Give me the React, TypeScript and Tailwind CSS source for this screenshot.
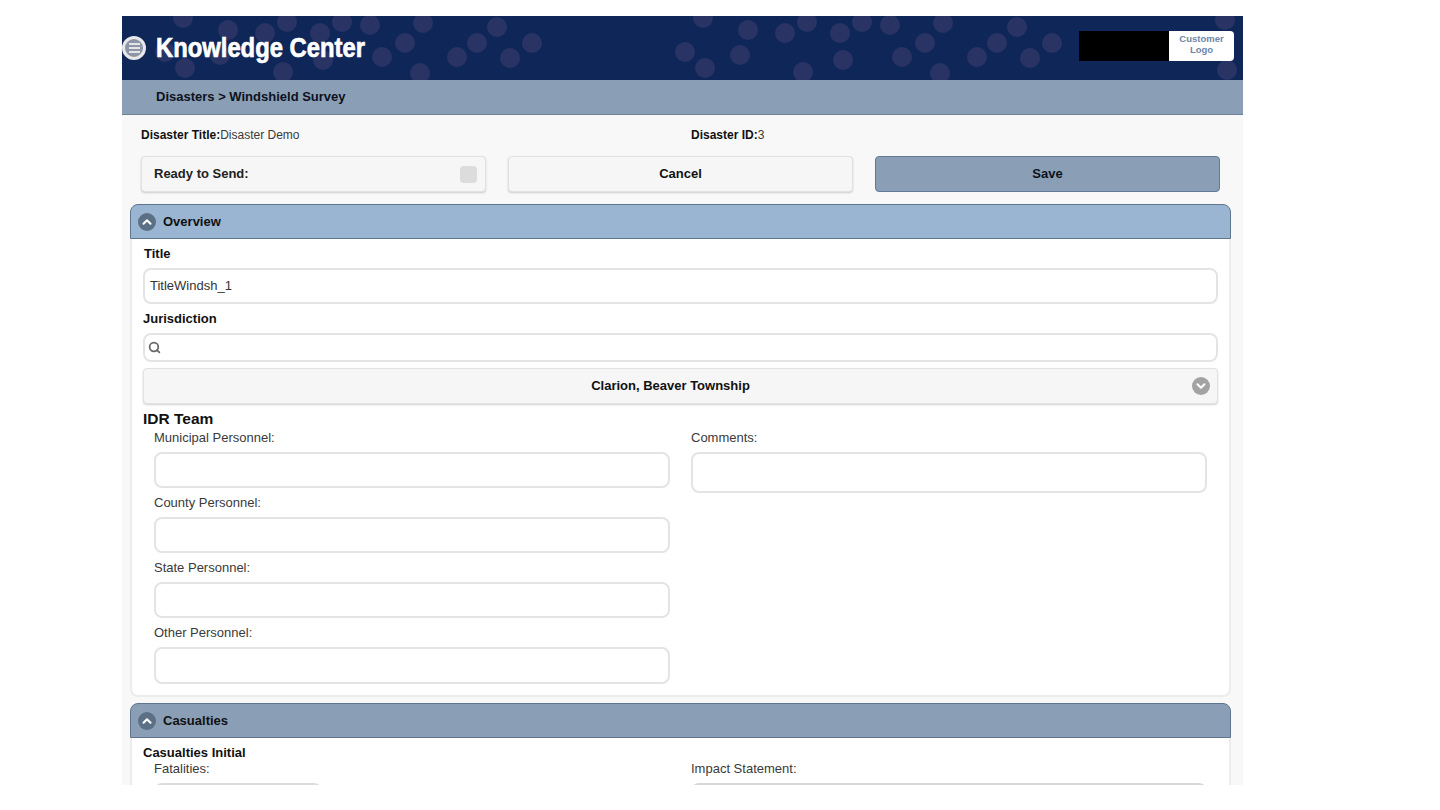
import React from 'react';
import { ChevronUp, ChevronDown, Search } from 'lucide-react';

const dots: [number, number][] = [
  [165, 52], [183, 18], [185, 68], [220, 55], [228, 30], [265, 33], [283, 72], [287, 22],
  [320, 33], [323, 60], [342, 22], [370, 25], [382, 57], [405, 43], [420, 73], [423, 23],
  [457, 57], [477, 43], [497, 27], [510, 58], [532, 43],
];

const HeaderDots = () => (
  <svg className="absolute inset-0" width="1121" height="64" viewBox="122 16 1121 64">
    {dots.map(([x, y], i) => (
      <circle key={i} cx={x} cy={y} r="10" fill="#293464" />
    ))}
    {dots.map(([x, y], i) => (
      <circle key={`b${i}`} cx={x + 520} cy={y} r="10" fill="#293464" />
    ))}
    <circle cx="1227" cy="70" r="10" fill="#293464" />
    <circle cx="1225" cy="20" r="10" fill="#293464" />
  </svg>
);

const Field = ({ label, className }: { label: string; className: string }) => (
  <div>
    <div className="text-[13px] leading-[15px] text-[#3a3a3a]">{label}</div>
    <div className={`mt-[7px] rounded-lg border-2 border-[#e4e4e4] bg-white ${className}`} />
  </div>
);

const SectionHeader = ({ title, bg }: { title: string; bg: string }) => (
  <div className={`flex h-[35px] items-center rounded-t-lg border border-[#5f7590] pl-[7px] ${bg}`}>
    <div className="flex h-[18px] w-[18px] items-center justify-center rounded-full bg-[#5c7085]">
      <ChevronUp size={14} strokeWidth={3.5} className="text-white" />
    </div>
    <span className="ml-[7px] text-[13px] font-bold text-[#111]">{title}</span>
  </div>
);

export default function App() {
  return (
    <div className="min-h-[810px] bg-white pt-[16px] font-['Liberation_Sans',Arial,sans-serif]">
      <div className="ml-[122px] h-[769px] w-[1121px] overflow-hidden bg-[#f8f8f8]">
        <div className="relative flex h-[64px] items-center overflow-hidden bg-[#0f2659]">
          <HeaderDots />
          <div className="relative flex h-[24px] w-[24px] items-center justify-center rounded-full border-[3px] border-[#e8e8e8] bg-[#8d96a8]">
            <div className="flex flex-col gap-[2px]">
              <div className="h-[2px] w-[11px] bg-[#e4e4e4]" />
              <div className="h-[2px] w-[11px] bg-[#e4e4e4]" />
              <div className="h-[2px] w-[11px] bg-[#e4e4e4]" />
            </div>
          </div>
          <div className="relative ml-[10px] origin-left scale-x-[0.85] whitespace-nowrap text-[28px] font-bold text-white [-webkit-text-stroke:0.7px_white]">
            Knowledge Center
          </div>
          <div className="absolute left-[957px] top-[15px] flex h-[30px]">
            <div className="w-[90px] bg-black" />
            <div className="flex w-[65px] items-center justify-center rounded-r-sm bg-white pb-[3px] text-center text-[9.5px] font-bold leading-[10.5px] text-[#6d86ab]">
              Customer
              <br />
              Logo
            </div>
          </div>
        </div>

        <div className="flex h-[35px] items-center border-b border-[#6d8097] bg-[#8a9fb6] pl-[34px] text-[13px] font-bold text-[#0c1220]">
          Disasters &gt; Windshield Survey
        </div>

        <div className="flex h-[41px] items-center pb-[2px] pl-[19px] text-[12px] text-[#3a3a3a]">
          <div className="w-[550px]">
            <span className="font-bold text-[#111]">Disaster Title:</span>Disaster Demo
          </div>
          <div>
            <span className="font-bold text-[#111]">Disaster ID:</span>3
          </div>
        </div>

        <div className="flex gap-[22px] pl-[19px]">
          <div className="flex h-[36px] w-[345px] items-center justify-between rounded border border-[#e2e2e2] bg-[#f6f6f6] pl-[12px] pr-[8px] text-[13px] font-bold text-[#222] shadow-[0_1px_2px_rgba(0,0,0,0.18)]">
            Ready to Send:
            <div className="h-[17px] w-[17px] rounded-sm bg-[#dcdcdc]" />
          </div>
          <div className="flex h-[36px] w-[345px] items-center justify-center rounded border border-[#e2e2e2] bg-[#f6f6f6] text-[13px] font-bold text-[#111] shadow-[0_1px_2px_rgba(0,0,0,0.18)]">
            Cancel
          </div>
          <div className="flex h-[36px] w-[345px] items-center justify-center rounded border border-[#627a94] bg-[#8a9fb6] text-[13px] font-bold text-[#0c1220]">
            Save
          </div>
        </div>

        <div className="ml-[8px] mt-[12px] w-[1101px]">
          <SectionHeader title="Overview" bg="bg-[#9ab5d1]" />
          <div className="h-[458px] rounded-b-lg border-x-2 border-b-2 border-[#ececec] bg-white px-[11px] pt-[7px]">
            <div className="pl-[1px] text-[13px] font-bold leading-[15px] text-[#111]">Title</div>
            <div className="mt-[7px] flex h-[36px] items-center rounded-lg border-2 border-[#e4e4e4] pl-[5px] text-[13px] text-[#333]">
              TitleWindsh_1
            </div>
            <div className="mt-[7px] text-[13px] font-bold leading-[15px] text-[#111]">Jurisdiction</div>
            <div className="mt-[7px] flex h-[29px] items-center rounded-lg border-2 border-[#e4e4e4] pl-[3px]">
              <Search size={13} strokeWidth={3.2} className="text-[#666]" />
            </div>
            <div className="relative mt-[6px] flex h-[36px] items-center justify-center rounded border border-[#e2e2e2] bg-[#f6f6f6] pr-[20px] text-[13px] font-bold text-[#111] shadow-[0_1px_2px_rgba(0,0,0,0.18)]">
              Clarion, Beaver Township
              <div className="absolute right-[7px] top-[8px] flex h-[18px] w-[18px] items-center justify-center rounded-full bg-[#a3a3a3]">
                <ChevronDown size={14} strokeWidth={3.5} className="text-white" />
              </div>
            </div>
            <div className="mt-[6px] text-[15.5px] font-bold leading-[18px] text-[#111]">IDR Team</div>
            <div className="mt-[2px] flex pl-[11px]">
              <div className="flex w-[516px] flex-col gap-[7px]">
                <Field label="Municipal Personnel:" className="h-[36px]" />
                <Field label="County Personnel:" className="h-[36px]" />
                <Field label="State Personnel:" className="h-[36px]" />
                <Field label="Other Personnel:" className="h-[37px]" />
              </div>
              <div className="ml-[21px] w-[516px]">
                <Field label="Comments:" className="h-[41px]" />
              </div>
            </div>
          </div>

          <div className="mt-[6px]">
            <SectionHeader title="Casualties" bg="bg-[#8a9fb6]" />
            <div className="h-[60px] border-x-2 border-[#ececec] bg-white px-[11px] pt-[7px]">
              <div className="text-[13px] font-bold leading-[15px] text-[#111]">Casualties Initial</div>
              <div className="mt-[1px] flex pl-[11px]">
                <div className="w-[516px]">
                  <div className="text-[13px] leading-[15px] text-[#3a3a3a]">Fatalities:</div>
                  <div className="mt-[7px] flex h-[30px] w-[168px] overflow-hidden rounded-lg border-t-2 border-[#dcdcdc]">
                    <div className="w-[96px] border-t border-[#b5b5b5]" />
                    <div className="w-[40px] border-l border-[#e6e6e6] bg-[#f6f6f6]" />
                    <div className="w-[32px] border-l border-[#e6e6e6] bg-[#f6f6f6]" />
                  </div>
                </div>
                <div className="ml-[21px] w-[516px]">
                  <div className="text-[13px] leading-[15px] text-[#3a3a3a]">Impact Statement:</div>
                  <div className="mt-[7px] h-[30px] rounded-lg border-t-2 border-[#d8d8d8]" />
                </div>
              </div>
            </div>
          </div>
        </div>
      </div>
    </div>
  );
}
